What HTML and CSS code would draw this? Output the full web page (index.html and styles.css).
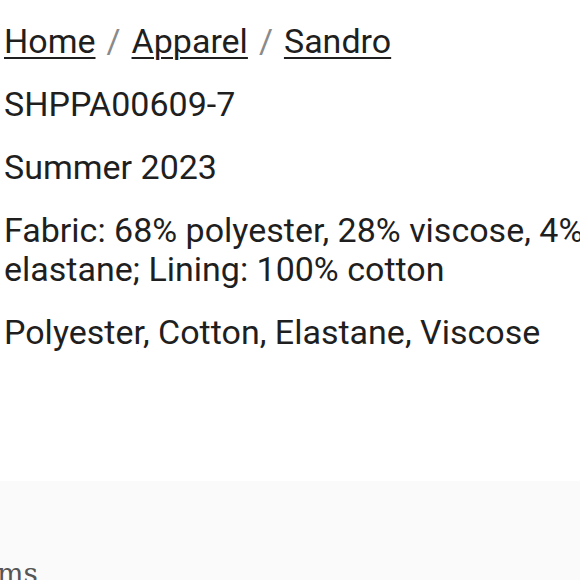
FILE: index.html
```html
<!DOCTYPE html>
<html>
<head>
<meta charset="utf-8">
<link rel="stylesheet" href="styles.css">
</head>
<body>
<div class="page">
  <section class="details">
    <nav class="crumbs">
      <a href="#">Home</a><span class="sep">/</span><a href="#">Apparel</a><span class="sep">/</span><a href="#">Sandro</a>
    </nav>
    <p class="row">SHPPA00609-7</p>
    <p class="row">Summer 2023</p>
    <p class="row">Fabric: 68% polyester, 28% viscose, 4% elastane; Lining: 100% cotton</p>
    <p class="row">Polyester, Cotton, Elastane, Viscose</p>
  </section>
  <section class="related">
    <h2 class="related-title">ms</h2>
  </section>
</div>
</body>
</html>
```
FILE: styles.css
```css
html, body {
  margin: 0;
  padding: 0;
  background: #ffffff;
  overflow: hidden;
}
.page {
  width: 580px;
  height: 580px;
  overflow: hidden;
  display: flex;
  flex-direction: column;
}
.details {
  width: 620px;
  flex: none;
  padding: 22px 0 0 4px;
  height: 481px;
  box-sizing: border-box;
  font-family: Roboto, "Liberation Sans", sans-serif;
  font-size: 34px;
  line-height: 39px;
  color: #1f1f1f;
}
.crumbs {
  margin: 0 0 24px 0;
}
.crumbs a {
  color: #1f1f1f;
  text-decoration: underline;
  text-decoration-thickness: 2px;
  text-underline-offset: 4px;
}
.sep {
  color: #8a8a8a;
  padding: 0 11px;
}
.row {
  margin: 0 0 24px 0;
}
.related {
  flex: 1;
  background: #fafafa;
  padding-top: 73px;
}
.related-title {
  margin: 0;
  font-family: "DejaVu Serif", "Liberation Serif", serif;
  font-weight: 300;
  font-size: 28px;
  line-height: 40px;
  color: #555555;
  text-indent: -3px;
  white-space: nowrap;
}
```
